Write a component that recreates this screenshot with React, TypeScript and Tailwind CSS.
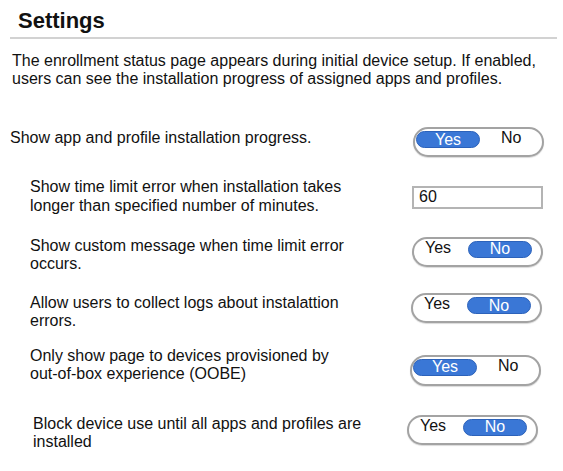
import React from "react";

function Toggle({ value, className }: { value: "yes" | "no"; className: string }) {
  return (
    <div
      className={
        "w-[131px] h-[30px] shrink-0 rounded-full border-2 border-[#a3a3a3] bg-white flex items-start shadow-[0_1px_1px_rgba(0,0,0,0.15)] " +
        className
      }
    >
      {value === "yes" ? (
        <>
          <div className="ml-[1px] mt-[2px] w-[64px] h-[17px] rounded-full bg-[#3a77d6] border border-[#2c62ba] flex items-center justify-center text-white text-[16px] leading-none">
            Yes
          </div>
          <span className="ml-[21px] text-[16px] leading-[17px] text-[#111]">No</span>
        </>
      ) : (
        <>
          <span className="w-[54px] pl-[11px] text-[16px] leading-[17px] text-[#111]">Yes</span>
          <div className="mt-[2px] w-[64px] h-[17px] rounded-full bg-[#3a77d6] border border-[#2c62ba] flex items-center justify-center text-white text-[16px] leading-none">
            No
          </div>
        </>
      )}
    </div>
  );
}

export default function App() {
  return (
    <div
      className="w-[563px] h-[471px] bg-white text-[#111] overflow-hidden"
      style={{ fontFamily: '"Liberation Sans", Arial, sans-serif' }}
    >
      <div className="pt-[8px] pl-[18px] text-[22px] leading-[26px] font-bold">Settings</div>
      <div className="mt-[3px] ml-[10px] w-[547px] h-[2px] bg-[#d2d2d2]" />
      <p className="mt-[13px] pl-[12px] text-[16px] leading-[18px] whitespace-nowrap">
        The enrollment status page appears during initial device setup. If enabled,
        <br />
        users can see the installation progress of assigned apps and profiles.
      </p>

      {/* Row 1 */}
      <div className="mt-[39px] flex items-start">
        <div className="w-[413px] shrink-0 pl-[10px] mt-[2px] text-[16px] leading-[18px] whitespace-nowrap">
          Show app and profile installation progress.
        </div>
        <Toggle value="yes" className="" />
      </div>

      {/* Row 2 */}
      <div className="mt-[21px] flex items-start">
        <div className="w-[412px] shrink-0 pl-[30px] text-[16px] leading-[18.5px] whitespace-nowrap">
          Show time limit error when installation takes
          <br />
          longer than specified number of minutes.
        </div>
        <div className="mt-[7.5px] w-[131px] h-[23px] shrink-0 border-2 border-[#b4b4b4] bg-white flex items-center pl-[5px] text-[16px] leading-none">
          60
        </div>
      </div>

      {/* Row 3 */}
      <div className="mt-[21.5px] flex items-start">
        <div className="w-[412px] shrink-0 pl-[30px] text-[16px] leading-[18.5px] whitespace-nowrap">
          Show custom message when time limit error
          <br />
          occurs.
        </div>
        <Toggle value="no" className="" />
      </div>

      {/* Row 4 */}
      <div className="mt-[19.5px] flex items-start">
        <div className="w-[411px] shrink-0 pl-[30px] mt-[0.5px] text-[16px] leading-[18.5px] whitespace-nowrap">
          Allow users to collect logs about instalattion
          <br />
          errors.
        </div>
        <Toggle value="no" className="" />
      </div>

      {/* Row 5 */}
      <div className="mt-[16px] flex items-start">
        <div className="w-[410px] shrink-0 pl-[30px] text-[16px] leading-[18.5px] whitespace-nowrap">
          Only show page to devices provisioned by
          <br />
          out-of-box experience (OOBE)
        </div>
        <Toggle value="yes" className="mt-[8px] h-[31px]" />
      </div>

      {/* Row 6 */}
      <div className="mt-[29px] flex items-start">
        <div className="w-[407px] shrink-0 pl-[33px] text-[16px] leading-[18.5px] whitespace-nowrap">
          Block device use until all apps and profiles are
          <br />
          installed
        </div>
        <Toggle value="no" className="" />
      </div>
    </div>
  );
}
